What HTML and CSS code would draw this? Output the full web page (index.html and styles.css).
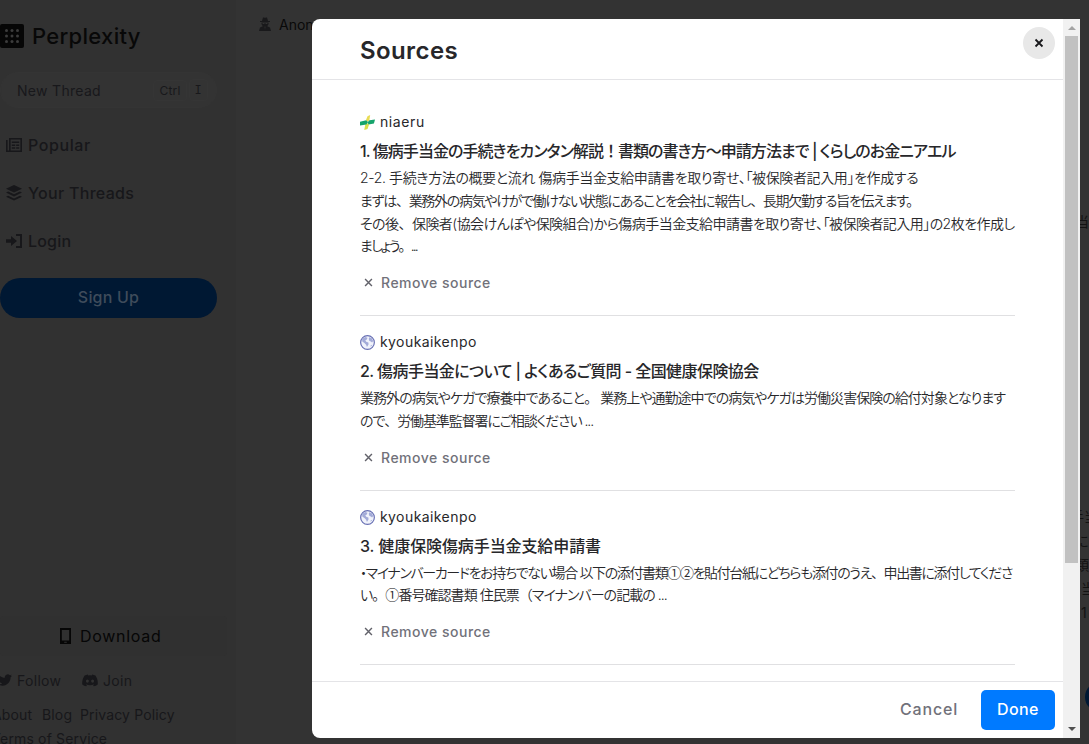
FILE: index.html
```html
<!DOCTYPE html>
<html lang="ja">
<head>
  <meta charset="UTF-8" />
  <meta name="viewport" content="width=device-width, initial-scale=1.0"/>
  <title>Perplexity</title>
  <link rel="stylesheet" href="styles.css">
</head>
<body>
  <div class="page">
    <div class="sidebar">
      <div class="logo">
        <svg class="logo-mark" viewBox="0 0 24 24">
          <rect width="24" height="24" rx="2" fill="#060606"/>
          <g fill="#3c3c3c">
            <circle cx="6.5" cy="6.5" r="1.5"/><circle cx="12" cy="6.5" r="1.5"/><circle cx="17.5" cy="6.5" r="1.5"/>
            <circle cx="6.5" cy="12" r="1.5"/><circle cx="12" cy="12" r="1.5"/><circle cx="17.5" cy="12" r="1.5"/>
            <circle cx="6.5" cy="17.5" r="1.5"/><circle cx="12" cy="17.5" r="1.5"/><circle cx="17.5" cy="17.5" r="1.5"/>
          </g>
        </svg>
        <span>Perplexity</span>
      </div>

      <div class="new-thread">
        <span class="new-thread-text">New Thread</span>
        <span class="key">Ctrl</span>
        <span class="key key-i">I</span>
      </div>

      <div class="nav">
        <div class="nav-item">
          <svg viewBox="0 0 16 16" fill="none" stroke="currentColor" stroke-width="1.6">
            <path d="M3.8 1.8h11.4v12.4H3.8zM.8 3v11.2h4"/>
            <path d="M5.8 5.2h7.4M5.8 8.2h3.4M10.2 8.2h3M5.8 11h3.4M10.2 11h3" stroke-width="1.4"/>
          </svg>
          <span class="popular">Popular</span>
        </div>
        <div class="nav-item">
          <svg viewBox="0 0 16 16" fill="currentColor">
            <path d="M8 0l8 3.7-8 3.8L0 3.7z"/>
            <path d="M0 7.6l2.2-1L8 9.3l5.8-2.7 2.2 1-8 3.8z"/>
            <path d="M0 11.7l2.2-1L8 13.4l5.8-2.7 2.2 1L8 15.6z"/>
          </svg>
          <span class="threads">Your Threads</span>
        </div>
        <div class="nav-item">
          <svg viewBox="0 0 16 16" fill="currentColor">
            <path d="M0 6.2h5V3l6 5-6 5V9.8H0z"/>
            <path d="M10 1h6v14h-6v-2h4V3h-4z"/>
          </svg>
          <span class="login">Login</span>
        </div>
      </div>

      <div class="sign-up">Sign Up</div>

      <div class="sidebar-bottom">
        <div class="download">
          <svg viewBox="0 0 11 16">
            <path fill="currentColor" fill-rule="evenodd" d="M0 0h11v16H0zM1.8 2v10.6h7.4V2zM4.2 13.7v1h2.6v-1z"/>
          </svg>
          <span>Download</span>
        </div>
        <div class="social">
          <svg class="twitter" viewBox="0 0 24 24" fill="currentColor"><path d="M23.953 4.57a10 10 0 01-2.825.775 4.958 4.958 0 002.163-2.723c-.951.555-2.005.959-3.127 1.184a4.92 4.92 0 00-8.384 4.482C7.69 8.095 4.067 6.13 1.64 3.162a4.822 4.822 0 00-.666 2.475c0 1.71.87 3.213 2.188 4.096a4.904 4.904 0 01-2.228-.616v.06a4.923 4.923 0 003.946 4.827 4.996 4.996 0 01-2.212.085 4.936 4.936 0 004.604 3.417 9.867 9.867 0 01-6.102 2.105c-.39 0-.779-.023-1.17-.067a13.995 13.995 0 007.557 2.209c9.053 0 13.998-7.496 13.998-13.985 0-.21 0-.42-.015-.63A9.935 9.935 0 0024 4.59z"/></svg>
          <span class="follow">Follow</span>
          <svg class="discord" viewBox="0 0 24 20" fill="currentColor"><path fill-rule="evenodd" d="M20.3 2.4A20 20 0 0015.4.8l-.7 1.4a18 18 0 00-5.4 0L8.6.8a20 20 0 00-4.9 1.6C.6 7-.3 11.5.1 16a20 20 0 006 3l1.3-2-1.900-1 .4-.3a14 14 0 0012.2 0l.4.3-1.900 1 1.300 2a20 20 0 006-3c.5-5.2-.8-9.7-3.600-13.600zM8 13.300a2.300 2.400 0 110-4.800 2.300 2.400 0 010 4.800zm8 0a2.300 2.400 0 110-4.800 2.300 2.400 0 010 4.800z"/></svg>
          <span class="join">Join</span>
        </div>
        <div class="links">
          <div class="links-row"><span class="about">About</span><span class="blog">Blog</span><span class="privacy">Privacy Policy</span></div>
          <div class="links-row"><span class="terms">Terms of Service</span></div>
        </div>
      </div>
    </div>

    <div class="main">
      <div class="user">
        <svg viewBox="0 0 12 14" fill="currentColor">
          <path d="M4 .5h1.200l.8.500.8-.5H8L9 4h2v1H1V4h2zM2.500 5.500h7v1.800l-1.300 2L11 10.500 12 14H0l1-3.500 2.800-1.200-1.300-2z"/>
          <path d="M3.600 6h1.900v1H3.600zM6.500 6h1.900v1H6.500zM5.500 9.500h1L6 13z" fill="#333"/>
        </svg>
        <span>Anonymous</span>
      </div>
      <div class="answer">
        <p class="answer-first">当</p>
        <p class="answer-out">手当</p>
        <p>に</p>
        <p>類</p>
        <p class="answer-in">当</p>
        <p class="answer-in">1</p>
        <div class="send"></div>
      </div>
    </div>
  </div>

  <div class="modal">
    <div class="modal-content">
      <div class="modal-header">
        <div class="modal-title">Sources</div>
        <div class="close">
          <svg viewBox="0 0 10 10"><path d="M1.500 1.500l7 7M8.500 1.500l-7 7"/></svg>
        </div>
      </div>

      <div class="modal-body">
        <div class="source">
          <div class="site">
            <svg viewBox="0 0 14 14">
              <path d="M9.500 0L8.700 5.200 6.400 6.200 5.600 4.600 7 1.200z" fill="#e8dc55"/>
              <path d="M4 14l1-5.300 2-1.100 1.400 1.500L7 13z" fill="#dbe04b"/>
              <path d="M0 6.200L5.700 4.800l1.800 1.700L6 8.900l-6 1z" fill="#16a46c"/>
              <path d="M14 4.200l-5.200.8-1.800 2 1 1.900L13 8z" fill="#16a46c"/>
            </svg>
            <span class="niaeru">niaeru</span>
          </div>
          <div class="source-title t1">1. 傷病手当金の手続きをカンタン解説<span class="full">！</span>書類の書き方～申請方法まで | くらしのお金ニアエル</div>
          <div class="source-text">
            <div class="l1">2-2. 手続き方法の概要と流れ 傷病手当金支給申請書を取り寄せ、「被保険者記入用」を作成する</div>
            <div class="l2">まずは<span class="full">、</span>業務外の病気やけがで働けない状態にあることを会社に報告し<span class="full">、</span>長期欠勤する旨を伝えます。</div>
            <div class="l3">その後<span class="full">、</span>保険者(協会けんぽや保険組合)から傷病手当金支給申請書を取り寄せ、「被保険者記入用」の2枚を作成し</div>
            <div class="l4">ましょう<span class="full">。</span>...</div>
          </div>
          <div class="remove">
            <svg viewBox="0 0 10 10"><path d="M1.200 1.200l7.600 7.600M8.800 1.200l-7.600 7.600"/></svg>
            <span>Remove source</span>
          </div>
        </div>

        <div class="source">
          <div class="site">
            <svg viewBox="0 0 14 14">
              <circle cx="7" cy="7" r="6.400" fill="#f1f3fb" stroke="#6870b4" stroke-width="1.100"/>
              <path d="M2 3.500l3-1.700 2 .7-.6 1.800L5 5l.8 1.300 2 .7.200 1.700-1.500 2.500-.8-2.200-1.600-1.500-2-1.500z" fill="#a3abd8"/>
              <path d="M8.500 2l2.500 1 1.300 2.500-1 1.500-1.300-1-1.500-.8-.3-1.500zM10 9.500l1.500-.3-1.500 2z" fill="#a3abd8"/>
            </svg>
            <span class="kyoukai">kyoukaikenpo</span>
          </div>
          <div class="source-title t2">2. 傷病手当金について | よくあるご質問 - 全国健康保険協会</div>
          <div class="source-text">
            <div class="l5">業務外の病気やケガで療養中であること<span class="full">。</span> 業務上や通勤途中での病気やケガは労働災害保険の給付対象となります</div>
            <div class="l6">ので<span class="full">、</span>労働基準監督署にご相談ください ...</div>
          </div>
          <div class="remove">
            <svg viewBox="0 0 10 10"><path d="M1.200 1.200l7.600 7.600M8.800 1.200l-7.600 7.600"/></svg>
            <span>Remove source</span>
          </div>
        </div>

        <div class="source">
          <div class="site">
            <svg viewBox="0 0 14 14">
              <circle cx="7" cy="7" r="6.400" fill="#f1f3fb" stroke="#6870b4" stroke-width="1.100"/>
              <path d="M2 3.500l3-1.700 2 .7-.6 1.800L5 5l.8 1.300 2 .7.200 1.700-1.500 2.500-.8-2.200-1.600-1.500-2-1.500z" fill="#a3abd8"/>
              <path d="M8.500 2l2.500 1 1.300 2.500-1 1.500-1.300-1-1.500-.8-.3-1.500zM10 9.500l1.500-.3-1.500 2z" fill="#a3abd8"/>
            </svg>
            <span class="kyoukai">kyoukaikenpo</span>
          </div>
          <div class="source-title t3">3. 健康保険傷病手当金支給申請書</div>
          <div class="source-text">
            <div class="l7">・マイナンバーカードをお持ちでない場合 以下の添付書類<span class="full">①②</span>を貼付台紙にどちらも添付のうえ<span class="full">、</span>申出書に添付してくださ</div>
            <div class="l8">い<span class="full">。①</span>番号確認書類 住民票<span class="full">（</span>マイナンバーの記載の ...</div>
          </div>
          <div class="remove">
            <svg viewBox="0 0 10 10"><path d="M1.200 1.200l7.600 7.600M8.800 1.200l-7.600 7.600"/></svg>
            <span>Remove source</span>
          </div>
        </div>
      </div>

      <div class="modal-footer">
        <span class="cancel">Cancel</span>
        <span class="done">Done</span>
      </div>
    </div>

    <div class="scrollbar">
      <div class="arrow-up"></div>
      <div class="thumb"></div>
      <div class="arrow-down"></div>
    </div>
  </div>
</body>
</html>
```
FILE: styles.css
```css
* {
  margin: 0;
  padding: 0;
  box-sizing: border-box;
}
body {
  width: 1089px;
  height: 744px;
  overflow: hidden;
  background-color: #333;
  font-family: Inter, "Noto Sans CJK JP", sans-serif;
  color: #27272a;
}
svg {
  display: block;
  flex-shrink: 0;
}
span {
  white-space: nowrap;
}

/* dimmed page */
.page {
  display: flex;
  height: 744px;
  overflow: hidden;
}
.sidebar {
  width: 236px;
  height: 744px;
  background-color: #313131;
  display: flex;
  flex-direction: column;
  padding-top: 24px;
  color: #17171a;
}
.logo {
  display: flex;
  align-items: center;
  height: 24px;
  color: #080808;
  font-size: 22px;
  font-weight: 500;
}
.logo span {
  margin-left: 8px;
  letter-spacing: 0.3px;
}
.logo-mark {
  width: 24px;
  height: 24px;
}
.new-thread {
  display: flex;
  align-items: center;
  width: 217px;
  height: 36px;
  margin-top: 24px;
  padding: 0 8px 0 16px;
  border: 1px solid #343434;
  border-radius: 18px;
  background-color: #333;
  font-size: 14px;
  color: #18181b;
}
.new-thread-text {
  flex: 1;
  letter-spacing: 0.3px;
}
.key {
  font-size: 12px;
  padding: 2px 5px;
  border: 1px solid #353535;
  border-radius: 4px;
  letter-spacing: 0.2px;
}
.key-i {
  font-family: "Liberation Mono", monospace;
  margin-left: 2px;
  padding: 4px 5px 2px;
}
.nav {
  margin-top: 17px;
}
.nav-item {
  display: flex;
  align-items: center;
  height: 40px;
  margin-bottom: 8px;
  padding-left: 6px;
  font-size: 16px;
  font-weight: 500;
}
.nav-item svg {
  width: 16px;
  height: 16px;
  margin-right: 6px;
}
.popular {
  letter-spacing: 0.6px;
}
.threads {
  letter-spacing: 0.3px;
}
.login {
  letter-spacing: 0.2px;
}
.sign-up {
  width: 217px;
  height: 40px;
  margin-top: 9px;
  border-radius: 20px;
  background-color: #001833;
  color: #3f4c5b;
  font-size: 16px;
  font-weight: 500;
  line-height: 38px;
  letter-spacing: 0.2px;
  text-align: center;
}
.sidebar-bottom {
  margin-top: auto;
  height: 128px;
  overflow: hidden;
}
.download {
  display: flex;
  align-items: center;
  width: 227px;
  height: 40px;
  padding-left: 60px;
  border-radius: 4px;
  background-color: #303030;
  color: #060606;
  font-size: 16px;
  letter-spacing: 0.7px;
}
.download svg {
  width: 11px;
  height: 16px;
  margin-right: 9px;
}
.social {
  display: flex;
  align-items: center;
  height: 20px;
  margin-top: 14px;
  font-size: 14px;
}
.twitter {
  width: 14px;
  height: 14px;
  margin-left: -2px;
  margin-right: 5px;
}
.follow {
  width: 65px;
  letter-spacing: 0.3px;
}
.discord {
  width: 16px;
  height: 13px;
  margin-right: 5px;
}
.join {
  letter-spacing: 0.3px;
}
.links {
  margin-top: 13px;
  margin-left: -8px;
  font-size: 14px;
  letter-spacing: 0.15px;
}
.links-row {
  display: flex;
  height: 24px;
  line-height: 24px;
}
.about {
  width: 50px;
}
.blog {
  width: 38px;
}
.main {
  flex: 1;
  height: 744px;
  display: flex;
  justify-content: space-between;
}
.user {
  display: flex;
  align-items: center;
  height: 28px;
  margin: 10px 0 0 23px;
  font-size: 14px;
  color: #090909;
}
.user svg {
  width: 12px;
  height: 14px;
  margin-right: 8px;
  color: #19191b;
}
.answer {
  display: flex;
  flex-direction: column;
  width: 14px;
  padding-top: 210px;
  font-size: 14px;
  line-height: 24px;
  color: #121212;
}
.answer p {
  height: 24px;
  white-space: nowrap;
}
.answer .answer-first {
  height: 295px;
}
.answer-out {
  text-indent: -5px;
}
.answer-in {
  text-indent: 6px;
}
.send {
  width: 30px;
  height: 30px;
  margin: 57px 0 0 10px;
  border-radius: 50%;
  background-color: #001833;
}

/* modal */
.modal {
  position: absolute;
  left: 312px;
  top: 19px;
  display: flex;
  width: 768px;
  height: 719px;
  overflow: hidden;
  border-radius: 8px 0 0 8px;
  background-color: #fff;
}
.modal-content {
  display: flex;
  flex-direction: column;
  width: 751px;
}
.modal-header {
  display: flex;
  align-items: center;
  justify-content: space-between;
  height: 61px;
  padding: 0 8px 0 48px;
  border-bottom: 1px solid #e4e4e7;
}
.modal-title {
  font-size: 24px;
  font-weight: 600;
  padding-top: 2px;
  letter-spacing: 0.4px;
}
.close {
  display: flex;
  align-items: center;
  justify-content: center;
  width: 32px;
  height: 32px;
  margin-bottom: 12px;
  border-radius: 50%;
  background-color: #e8e8e8;
}
.close svg {
  width: 10px;
  height: 10px;
  stroke: #18181b;
  stroke-width: 1.8;
}
.modal-body {
  flex: 1;
  min-height: 0;
  overflow: hidden;
  padding: 16px 48px 0;
}
.source {
  padding: 16px 0 24.5px;
  border-bottom: 1px solid #e0e0e2;
}
.site {
  display: flex;
  align-items: center;
  height: 20px;
  font-size: 14px;
}
.site svg {
  width: 15px;
  height: 15px;
  margin: 1px 5px 0 0;
}
.site span {
  margin-top: -1px;
}
.niaeru {
  letter-spacing: 0.6px;
}
.kyoukai {
  letter-spacing: 0.42px;
}
.source-title {
  height: 22px;
  margin: 8px 0 5px;
  font-size: 16px;
  font-weight: 500;
  line-height: 22px;
  white-space: nowrap;
  font-feature-settings: "palt";
}
.source-text {
  font-size: 14px;
  font-weight: 350;
  line-height: 22.75px;
  white-space: nowrap;
  font-feature-settings: "palt";
}
.source-text div {
  height: 22.75px;
}
.full {
  font-family: "Noto Sans CJK JP", sans-serif;
  font-feature-settings: normal;
  line-height: 1;
}

/* tracking of each text line */
.t1 { letter-spacing: -0.95px; }
.t2 { letter-spacing: -0.57px; }
.t3 { letter-spacing: -0.1px; }
.l1 { letter-spacing: -0.38px; }
.l2 { letter-spacing: -1.3px; }
.l3 { letter-spacing: -0.55px; }
.l4 { letter-spacing: -1.9px; }
.l5 { letter-spacing: -0.96px; }
.l6 { letter-spacing: -1.1px; }
.l7 { letter-spacing: -1.37px; }
.l8 { letter-spacing: -0.95px; }

.remove {
  display: flex;
  align-items: center;
  height: 16px;
  margin-top: 16.5px;
  padding-left: 4px;
  color: #71717a;
  font-size: 14px;
  font-weight: 500;
  letter-spacing: 0.5px;
}
.remove svg {
  width: 9px;
  height: 9px;
  margin-right: 8px;
  stroke: #62626a;
  stroke-width: 1.6;
}
.modal-footer {
  display: flex;
  align-items: center;
  justify-content: flex-end;
  height: 57px;
  padding-right: 8px;
  border-top: 1px solid #e4e4e7;
  font-size: 16px;
  font-weight: 500;
}
.cancel {
  color: #71717a;
  margin-right: 23px;
  margin-top: -2px;
  letter-spacing: 0.8px;
}
.done {
  width: 74px;
  height: 40px;
  border-radius: 5px;
  background-color: #007aff;
  color: #fff;
  line-height: 38px;
  letter-spacing: 0.4px;
  text-align: center;
}
.scrollbar {
  display: flex;
  flex-direction: column;
  align-items: center;
  width: 17px;
  background-color: #f1f1f1;
}
.arrow-up {
  margin: 7px 0 6px;
  border: 4px solid transparent;
  border-top: 0;
  border-bottom-color: #a3a3a3;
}
.thumb {
  width: 13px;
  height: 527px;
  background-color: #c1c1c1;
}
.arrow-down {
  margin: auto 0 7px;
  border: 4px solid transparent;
  border-bottom: 0;
  border-top-color: #505050;
}
```
